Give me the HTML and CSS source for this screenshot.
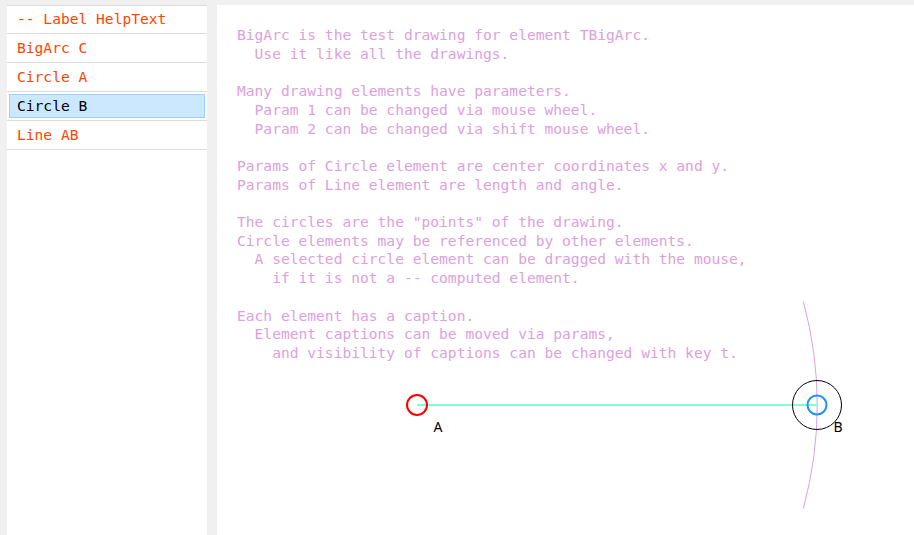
FILE: index.html
```html
<!DOCTYPE html>
<html>
<head>
<meta charset="utf-8">
<link rel="stylesheet" href="styles.css">
</head>
<body>
<div class="app">
  <ul class="list">
    <li class="item"><span class="label">-- Label HelpText</span></li>
    <li class="item"><span class="label">BigArc C</span></li>
    <li class="item"><span class="label">Circle A</span></li>
    <li class="item selected"><span class="label">Circle B</span></li>
    <li class="item"><span class="label">Line AB</span></li>
  </ul>
  <div class="canvas">
<pre class="help">BigArc is the test drawing for element TBigArc.
  Use it like all the drawings.

Many drawing elements have parameters.
  Param 1 can be changed via mouse wheel.
  Param 2 can be changed via shift mouse wheel.

Params of Circle element are center coordinates x and y.
Params of Line element are length and angle.

The circles are the "points" of the drawing.
Circle elements may be referenced by other elements.
  A selected circle element can be dragged with the mouse,
    if it is not a -- computed element.

Each element has a caption.
  Element captions can be moved via params,
    and visibility of captions can be changed with key t.</pre>
    <svg class="drawing" width="697" height="530" viewBox="0 0 697 530">
      <path d="M586.4 296.5 A400 400 0 0 1 586.4 503.5" fill="none" stroke="#dda0dd" stroke-width="1"/>
      <line x1="200" y1="400" x2="600" y2="400" stroke="#7fffd4" stroke-width="2"/>
      <circle cx="200" cy="400" r="10" fill="none" stroke="#ff0000" stroke-width="2"/>
      <circle cx="600" cy="400" r="24.5" fill="none" stroke="#000000" stroke-width="1"/>
      <circle cx="600" cy="400" r="9.5" fill="none" stroke="#1e90ff" stroke-width="2"/>
      <text x="216.5" y="427" class="cap">A</text>
      <text x="616.5" y="427" class="cap">B</text>
    </svg>
  </div>
</div>
</body>
</html>
```
FILE: styles.css
```css
html, body {
  margin: 0;
  padding: 0;
  height: 100%;
  background: #f0f0f0;
}
.app {
  display: flex;
  gap: 10px;
  box-sizing: border-box;
  height: 100%;
  padding: 5px 0 0 7px;
}
.list {
  list-style: none;
  margin: 0;
  padding: 0;
  width: 200px;
  flex: none;
  background: #ffffff;
  border-top: 1px solid #dddddd;
  font-family: "DejaVu Sans Mono", "Liberation Mono", monospace;
  font-size: 14.6px;
  color: #ff4500;
}
.item {
  height: 29px;
  box-sizing: border-box;
  padding: 2px;
  border-bottom: 1px solid #dddddd;
}
.item:first-child {
  height: 28px;
  padding-top: 1px;
}
.label {
  display: block;
  height: 24px;
  box-sizing: border-box;
  border: 1px solid transparent;
  padding-left: 7px;
  line-height: 22px;
  white-space: pre;
}
.selected .label {
  background: #cce8ff;
  border-color: #99d1ff;
  color: #000000;
}
.canvas {
  position: relative;
  flex: 1;
  background: #ffffff;
  overflow: hidden;
}
.help {
  margin: 0;
  padding: 21px 0 0 20px;
  font-family: "DejaVu Sans Mono", "Liberation Mono", monospace;
  font-size: 14.6px;
  line-height: 18.7px;
  color: #dda0dd;
}
.drawing {
  position: absolute;
  left: 0;
  top: 0;
}
.cap {
  font-family: "Noto Sans", "Open Sans", sans-serif;
  font-size: 14px;
  fill: #000000;
}
```
